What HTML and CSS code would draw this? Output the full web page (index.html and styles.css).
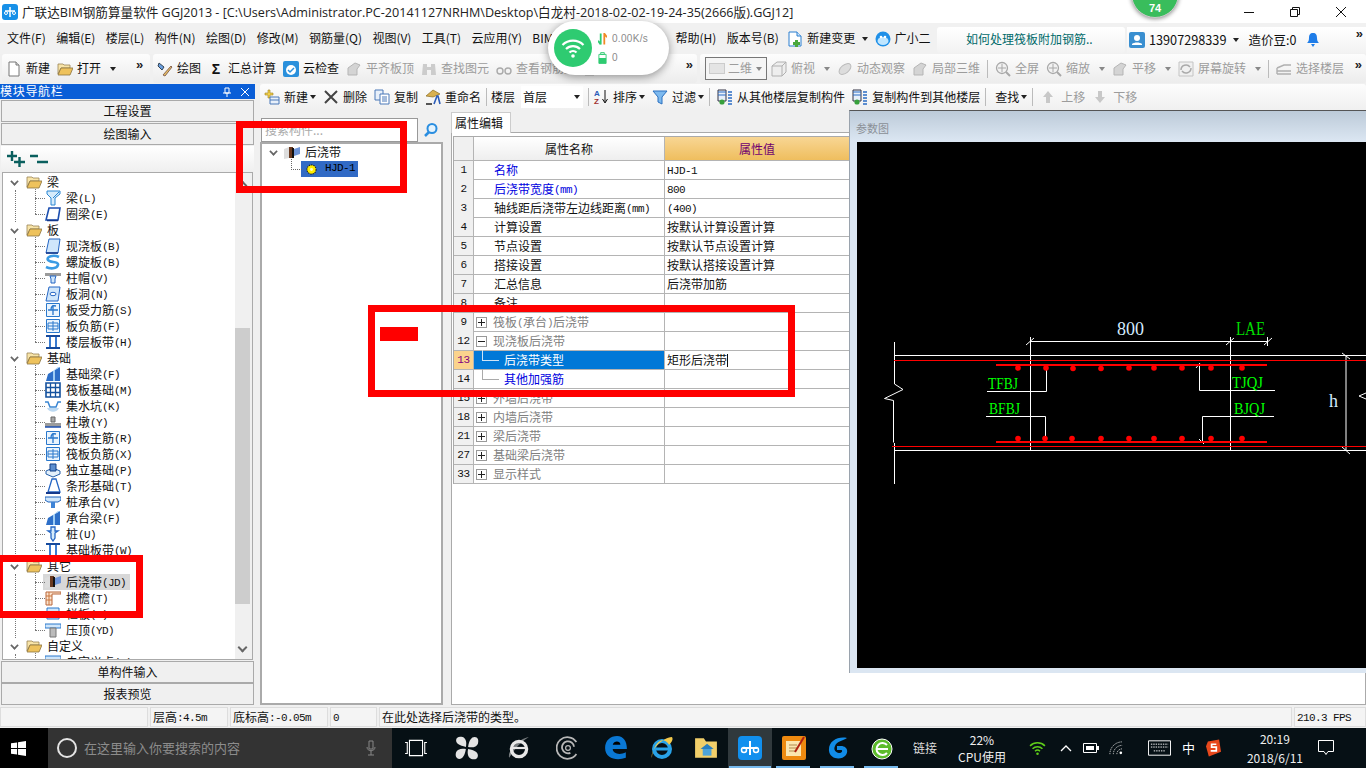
FILE: index.html
```html
<!DOCTYPE html>
<html lang="zh-CN">
<head>
<meta charset="utf-8">
<title>广联达BIM钢筋算量软件 GGJ2013</title>
<link rel="stylesheet" href="styles.css">
</head>
<body>
<svg class="defs" width="0" height="0">
  <symbol id="folder" viewBox="0 0 16 16"><path d="M1 3h5l1 1h6v3H4L1 13z" fill="#f8e4a8" stroke="#9a8454" stroke-width=".8"/><path d="M1 14l3-7h12l-3 7z" fill="#eec25c" stroke="#8c7440" stroke-width=".8"/></symbol>
  <symbol id="t-beam" viewBox="0 0 16 16"><path d="M2 1h13v3l-5 4v7H6V8L2 4z" fill="#d5ebfb" stroke="#2a86d2"/><path d="M8 8l6-6" stroke="#2a86d2"/></symbol>
  <symbol id="t-ring" viewBox="0 0 16 16"><path d="M4 2h11l-2 12H1z" fill="#fff" stroke="#1c4fb0" stroke-width="1.6"/><path d="M2 14.5h11" stroke="#14398c" stroke-width="1.5"/></symbol>
  <symbol id="t-slab" viewBox="0 0 16 16"><path d="M4 1h11l-2 14H1z" fill="#cfe6fb" stroke="#2566c4"/><path d="M1 15h12" stroke="#14398c" stroke-width="1.6"/></symbol>
  <symbol id="t-spiral" viewBox="0 0 16 16"><path d="M14 3C8 0 1 3 3 6s11 1 10 5-8 4-12 2" fill="none" stroke="#3a9be4" stroke-width="2.6"/></symbol>
  <symbol id="t-cap" viewBox="0 0 16 16"><path d="M0 3h16v3H0z" fill="#9b9b9b"/><path d="M5 6h6l-1 3v4H6V9z" fill="#cfe6fb" stroke="#2566c4"/></symbol>
  <symbol id="t-hole" viewBox="0 0 16 16"><path d="M4 1h11l-2 14H1z" fill="#cfe6fb" stroke="#2566c4"/><ellipse cx="8" cy="8" rx="3" ry="1.7" fill="#fff" stroke="#2566c4"/></symbol>
  <symbol id="t-force" viewBox="0 0 16 16"><path d="M1.500 1.500h13v13h-13z" fill="#eaf4fd" stroke="#2a78cc"/><path d="M8 3v10M3 8h10M11 4c-4-1-5 1-5 4" fill="none" stroke="#2a78cc" stroke-width="1.3"/></symbol>
  <symbol id="t-neg" viewBox="0 0 16 16"><path d="M1.500 1.500h13v13h-13z" fill="#eaf4fd" stroke="#2a78cc"/><path d="M8 3v10M3 8h10M3 5h10v6H3z" fill="none" stroke="#2a78cc"/></symbol>
  <symbol id="t-band" viewBox="0 0 16 16"><path d="M1 2h14M1 14h14" stroke="#164a9c" stroke-width="2"/><path d="M5 3v10M11 3v10" stroke="#3a7bd0" stroke-width="2"/></symbol>
  <symbol id="t-fbeam" viewBox="0 0 16 16"><path d="M1 15l2-7 5-3v10zM10 15V4l5-3v14z" fill="#2d6fc8"/><path d="M8 5l5-4 2 0-5 3v11H8z" fill="#9fcdf3"/></symbol>
  <symbol id="t-raft" viewBox="0 0 16 16"><path d="M1 1h14v14H1z" fill="#fff" stroke="#14529e" stroke-width="1.600"/><path d="M1 5.500h14M1 10.500h14M5.500 1v14M10.500 1v14" stroke="#14529e" stroke-width="1.300"/></symbol>
  <symbol id="t-pit" viewBox="0 0 16 16"><path d="M0 4h3l2 5h6l2-5h3" fill="none" stroke="#3a86d2" stroke-width="1.500"/><path d="M2 10c2 5 10 5 12 0z" fill="#bcd9f2"/></symbol>
  <symbol id="t-pier" viewBox="0 0 16 16"><path d="M6 3h4v5H6z" fill="#a8a8a8" stroke="#666"/><path d="M0 9h16v4H0z" fill="#9b9b9b"/><path d="M0 13h16" stroke="#1c4fb0" stroke-width="1.500"/></symbol>
  <symbol id="t-ind" viewBox="0 0 16 16"><path d="M1 9l7-3 7 3v3l-7 3-7-3z" fill="#e3f0fb" stroke="#245ea8"/><path d="M5 2h6v7H5z" fill="#5d8fcf" stroke="#133f86"/></symbol>
  <symbol id="t-strip" viewBox="0 0 16 16"><path d="M7 1h4l4 13H3z" fill="#fff" stroke="#2566c4" stroke-width="1.300"/><path d="M1 15h14" stroke="#14398c" stroke-width="2"/></symbol>
  <symbol id="t-pcap" viewBox="0 0 16 16"><path d="M0 3h16v3l-3 2H3L0 6z" fill="#cfe6fb" stroke="#1d63bd"/><path d="M6 8h4v6H6z" fill="#3e83d6"/></symbol>
  <symbol id="t-pile" viewBox="0 0 16 16"><path d="M6 1h4v4h3l-3 2v5l-2 3-2-3V7L3 5h3z" fill="#d5ebfb" stroke="#2566c4" stroke-width="1.300"/></symbol>
  <symbol id="t-post" viewBox="0 0 16 16"><path d="M0 2h16v4H0z" fill="#cfe6fb" stroke="#2a78cc"/><path d="M5 6h6v9H5z" fill="#bbb" stroke="#777"/></symbol>
  <symbol id="t-rail" viewBox="0 0 16 16"><path d="M2 2h12v11H2z" fill="#cfe6fb" stroke="#2a78cc"/></symbol>
  <symbol id="t-pour" viewBox="0 0 16 16"><path d="M0 4l5-2v11l-5 1z" fill="#ddd"/><path d="M5 2h4v11H5z" fill="#6a3a20"/><path d="M8 3h2v10H8z" fill="#111"/><path d="M10 4l6-2v7l-6 2z" fill="#6d94d8"/></symbol>
  <symbol id="t-eave" viewBox="0 0 16 16"><path d="M1 2h15v2H7v11H1z" fill="#fbe4cf" stroke="#b9663a"/><path d="M1 6h6M1 10h6M4 2v13" stroke="#c9743d"/></symbol>
  <symbol id="gear" viewBox="0 0 12 12"><circle cx="6" cy="6" r="5" fill="#ffee00" stroke="#222" stroke-width="1.200" stroke-dasharray="1.500 1"/><circle cx="6" cy="6" r="1.600" fill="#fffbd0"/></symbol>
  <symbol id="doc" viewBox="0 0 16 16"><path d="M3 1h7l3 3v11H3z" fill="#fff" stroke="#777"/><path d="M10 1v3h3" fill="#ddd" stroke="#777"/></symbol>
  <symbol id="gray" viewBox="0 0 16 16"><path d="M2 7l7-5 5 2-3 4v6H2z" fill="#d4d4d4" stroke="#b5b5b5"/></symbol>
  <symbol id="gray-box" viewBox="0 0 16 16"><path d="M1 5l5-4h9v10l-4 4H1z" fill="#eee" stroke="#b0b0b0"/><path d="M1 5h10v10M11 5l4-4" fill="none" stroke="#b0b0b0"/></symbol>
  <symbol id="gray-mag" viewBox="0 0 16 16"><circle cx="7" cy="7" r="5.500" fill="#f2f2f2" stroke="#a8a8a8" stroke-width="1.300"/><path d="M7 3v8M3 7h8" stroke="#a8a8a8"/><path d="M11 11l4 4" stroke="#a8a8a8" stroke-width="2"/></symbol>
  <symbol id="gray-rot" viewBox="0 0 16 16"><path d="M1 1h14v14H1z" fill="#f0f0f0" stroke="#c4c4c4"/><path d="M3 9a5 5 0 0 1 9-3M13 7a5 5 0 0 1-9 3" fill="none" stroke="#aaa" stroke-width="1.500"/></symbol>
  <symbol id="gray-lay" viewBox="0 0 16 16"><path d="M1 7l7-3h7M1 10h14M1 13h14M1 7v6" fill="none" stroke="#b0b0b0" stroke-width="1.400"/></symbol>
  <symbol id="copy-l" viewBox="0 0 16 16"><path d="M1 1h8v11H1z" fill="#e8f0fa" stroke="#334"/><path d="M1 3h8M1 6h8" stroke="#2b6cc4"/><circle cx="5" cy="13" r="2.600" fill="#37a03c"/><path d="M11 3h4M11 6h4M11 9h4M11 12h4M11 15h4" stroke="#2b6cc4" stroke-width="1.600"/></symbol>
  <symbol id="wifi" viewBox="0 0 24 20"><path d="M1.500 7a15 15 0 0 1 21 0M5 11a10 10 0 0 1 14 0M8.500 14.500a5 5 0 0 1 7 0" fill="none" stroke="currentColor" stroke-width="2.200"/><circle cx="12" cy="18" r="1.800" fill="currentColor"/></symbol>
</svg>

<div class="page">
  <header class="title">
    <svg class="appicon" viewBox="0 0 16 16"><rect width="16" height="16" rx="3" fill="#1790e8"/><path d="M8 3v10M3 7h10" stroke="#fff" stroke-width="1.500" fill="none"/><circle cx="4" cy="9" r="1.500" fill="none" stroke="#fff"/><circle cx="12" cy="9" r="1.500" fill="none" stroke="#fff"/></svg>
    <span class="title-text">广联达BIM钢筋算量软件 GGJ2013 - [C:\Users\Administrator.PC-20141127NRHM\Desktop\白龙村-2018-02-02-19-24-35(2666版).GGJ12]</span>
    <div class="winbtns">
      <svg viewBox="0 0 12 12"><path d="M1 6.500h10" stroke="#111"/></svg>
      <svg viewBox="0 0 12 12"><path d="M1.500 3.500h7v7h-7zM3.500 3.500v-2h7v7h-2" fill="none" stroke="#111"/></svg>
      <svg viewBox="0 0 12 12"><path d="M1 1l10 10M11 1L1 11" stroke="#111"/></svg>
    </div>
  </header>

  <nav class="menubar">
    <div class="menus">
      <span>文件(F)</span><span>编辑(E)</span><span>楼层(L)</span><span>构件(N)</span><span>绘图(D)</span><span>修改(M)</span><span>钢筋量(Q)</span><span>视图(V)</span><span>工具(T)</span><span>云应用(Y)</span><span>BIM应用(I)</span><span class="m-help">帮助(H)</span><span>版本号(B)</span>
      <span class="it m-change"><svg class="ic" viewBox="0 0 16 16"><path d="M2 1h8l4 4v10H2z" fill="#fff" stroke="#2b7fd0"/><path d="M10 1v4h4" fill="#cfe6fb" stroke="#2b7fd0"/><path d="M8 9h3v2h2v3h-2v2H8v-2H6v-3h2z" fill="#4aa83c"/></svg>新建变更<i class="car"></i></span>
      <span class="it m-xiao"><svg class="ic" viewBox="0 0 16 16"><circle cx="8" cy="8" r="7.500" fill="#1f90e8"/><ellipse cx="8" cy="10" rx="5.500" ry="4" fill="#bfe6ff"/><circle cx="6" cy="6" r="1.300" fill="#fff"/><circle cx="10" cy="6" r="1.300" fill="#fff"/></svg>广小二</span>
    </div>
    <div class="news">如何处理筏板附加钢筋..</div>
    <div class="user">
      <svg class="ic" viewBox="0 0 16 16"><rect width="16" height="16" rx="2" fill="#3a8fd0"/><circle cx="8" cy="6" r="3" fill="#fff"/><path d="M3 13h10v-1c-2-2-8-2-10 0z" fill="#fff"/></svg>
      <span class="phone">13907298339</span><i class="car"></i><span class="dou">造价豆:0</span>
      <svg class="bell" viewBox="0 0 12 14"><path d="M6 0c-3 0-4 2-4 5 0 3-1 4-2 5h12c-1-1-2-2-2-5 0-3-1-5-4-5z" fill="#1f7de8"/><path d="M4 11h4l-2 3z" fill="#1f7de8"/></svg>
      <span class="more">»</span>
    </div>
  </nav>

  <div class="toolbar1">
    <div class="seg seg-a">
      <span class="it"><svg class="ic"><use href="#doc"/></svg>新建</span>
      <span class="it"><svg class="ic"><use href="#folder"/></svg>打开<i class="car"></i></span>
      <span class="more">»</span>
    </div>
    <div class="seg seg-b">
      <span class="it"><svg class="ic" viewBox="0 0 16 16"><path d="M2 2l5 4-2 3-4-4z" fill="#6a9fe0" stroke="#345"/><path d="M6 14l8-9 1 1-7 9z" fill="#e8c060" stroke="#865"/></svg>绘图</span>
      <span class="it"><b class="sigma">Σ</b>汇总计算</span>
      <span class="it"><svg class="ic" viewBox="0 0 16 16"><rect width="16" height="16" rx="2" fill="#2a90dc"/><circle cx="8" cy="9" r="5" fill="#fff"/><path d="M5 9l2 2 4-4" fill="none" stroke="#2a90dc" stroke-width="1.500"/></svg>云检查</span>
      <span class="it off"><svg class="ic"><use href="#gray"/></svg>平齐板顶</span>
      <span class="it off"><svg class="ic" viewBox="0 0 16 16"><path d="M2 3h4v11H1zM10 3h4l1 11h-5zM6 6h4v3H6z" fill="#ccc"/></svg>查找图元</span>
      <span class="it off"><svg class="ic" viewBox="0 0 16 16"><circle cx="4" cy="10" r="3" fill="none" stroke="#aaa" stroke-width="1.400"/><circle cx="12" cy="10" r="3" fill="none" stroke="#aaa" stroke-width="1.400"/></svg>查看钢筋量</span>
      <span class="it off"><svg class="ic"><use href="#gray"/></svg>批量选择</span>
      <span class="more end">»</span>
    </div>
    <div class="seg seg-c">
      <span class="combo off"><i class="swatch"></i>二维<i class="car"></i></span>
      <span class="it off n"><svg class="ic"><use href="#gray-box"/></svg>俯视<i class="car"></i></span>
      <span class="it off"><svg class="ic" viewBox="0 0 16 16"><ellipse cx="8" cy="8" rx="7" ry="4" fill="#ddd" stroke="#bbb" transform="rotate(-40 8 8)"/></svg>动态观察</span>
      <span class="it off"><svg class="ic"><use href="#gray"/></svg>局部三维</span>
      <i class="sep"></i>
      <span class="it off n"><svg class="ic"><use href="#gray-mag"/></svg>全屏</span>
      <span class="it off"><svg class="ic"><use href="#gray-mag"/></svg>缩放<i class="car"></i></span>
      <span class="it off"><svg class="ic"><use href="#gray"/></svg>平移<i class="car"></i></span>
      <span class="it off"><svg class="ic"><use href="#gray-rot"/></svg>屏幕旋转<i class="car"></i></span>
      <i class="sep"></i>
      <span class="it off"><svg class="ic"><use href="#gray-lay"/></svg>选择楼层</span>
      <span class="more end">»</span>
    </div>
  </div>

  <main class="main">
    <aside class="nav">
      <div class="nav-head"><span>模块导航栏</span>
        <svg viewBox="0 0 10 10"><path d="M3 1h4v5H3zM1 6h8M5 6v4" fill="none" stroke="#fff"/></svg>
        <svg viewBox="0 0 10 10"><path d="M1 1l8 8M9 1L1 9" stroke="#fff"/></svg>
      </div>
      <div class="nav-btn">工程设置</div>
      <div class="nav-btn">绘图输入</div>
      <div class="nav-tools">
        <svg viewBox="0 0 18 16"><path d="M0 5h10M5 0v10M7 11h11M12.500 6v10" stroke="#0a5f5e" stroke-width="2.400"/></svg>
        <svg viewBox="0 0 18 16"><path d="M0 5h8M7 11h11" stroke="#0a5f5e" stroke-width="2.400"/></svg>
      </div>
      <div class="nav-tree">
        <div class="tree">
          <div class="grp">
            <div class="gh"><i class="chev"></i><svg class="ti"><use href="#folder"/></svg>梁</div>
            <div class="node"><svg class="ti"><use href="#t-beam"/></svg>梁<b class="m">(L)</b></div>
            <div class="node"><svg class="ti"><use href="#t-ring"/></svg>圈梁<b class="m">(E)</b></div>
          </div>
          <div class="grp">
            <div class="gh"><i class="chev"></i><svg class="ti"><use href="#folder"/></svg>板</div>
            <div class="node"><svg class="ti"><use href="#t-slab"/></svg>现浇板<b class="m">(B)</b></div>
            <div class="node"><svg class="ti"><use href="#t-spiral"/></svg>螺旋板<b class="m">(B)</b></div>
            <div class="node"><svg class="ti"><use href="#t-cap"/></svg>柱帽<b class="m">(V)</b></div>
            <div class="node"><svg class="ti"><use href="#t-hole"/></svg>板洞<b class="m">(N)</b></div>
            <div class="node"><svg class="ti"><use href="#t-force"/></svg>板受力筋<b class="m">(S)</b></div>
            <div class="node"><svg class="ti"><use href="#t-neg"/></svg>板负筋<b class="m">(F)</b></div>
            <div class="node"><svg class="ti"><use href="#t-band"/></svg>楼层板带<b class="m">(H)</b></div>
          </div>
          <div class="grp">
            <div class="gh"><i class="chev"></i><svg class="ti"><use href="#folder"/></svg>基础</div>
            <div class="node"><svg class="ti"><use href="#t-fbeam"/></svg>基础梁<b class="m">(F)</b></div>
            <div class="node"><svg class="ti"><use href="#t-raft"/></svg>筏板基础<b class="m">(M)</b></div>
            <div class="node"><svg class="ti"><use href="#t-pit"/></svg>集水坑<b class="m">(K)</b></div>
            <div class="node"><svg class="ti"><use href="#t-pier"/></svg>柱墩<b class="m">(Y)</b></div>
            <div class="node"><svg class="ti"><use href="#t-force"/></svg>筏板主筋<b class="m">(R)</b></div>
            <div class="node"><svg class="ti"><use href="#t-neg"/></svg>筏板负筋<b class="m">(X)</b></div>
            <div class="node"><svg class="ti"><use href="#t-ind"/></svg>独立基础<b class="m">(P)</b></div>
            <div class="node"><svg class="ti"><use href="#t-strip"/></svg>条形基础<b class="m">(T)</b></div>
            <div class="node"><svg class="ti"><use href="#t-pcap"/></svg>桩承台<b class="m">(V)</b></div>
            <div class="node"><svg class="ti"><use href="#t-fbeam"/></svg>承台梁<b class="m">(F)</b></div>
            <div class="node"><svg class="ti"><use href="#t-pile"/></svg>桩<b class="m">(U)</b></div>
            <div class="node"><svg class="ti"><use href="#t-band"/></svg>基础板带<b class="m">(W)</b></div>
          </div>
          <div class="grp">
            <div class="gh"><i class="chev"></i><svg class="ti"><use href="#folder"/></svg>其它</div>
            <div class="node sel"><svg class="ti"><use href="#t-pour"/></svg><span>后浇带<b class="m">(JD)</b></span></div>
            <div class="node"><svg class="ti"><use href="#t-eave"/></svg>挑檐<b class="m">(T)</b></div>
            <div class="node"><svg class="ti"><use href="#t-rail"/></svg>栏板<b class="m">(K)</b></div>
            <div class="node"><svg class="ti"><use href="#t-post"/></svg>压顶<b class="m">(YD)</b></div>
          </div>
          <div class="grp">
            <div class="gh"><i class="chev"></i><svg class="ti"><use href="#folder"/></svg>自定义</div>
            <div class="node"><svg class="ti"><use href="#t-post"/></svg>自定义点<b class="m">(X)</b></div>
          </div>
        </div>
        <div class="vscroll"><i class="sb-up"></i><i class="thumb"></i><i class="sb-down"></i></div>
      </div>
      <div class="nav-btn b2">单构件输入</div>
      <div class="nav-btn b2">报表预览</div>
    </aside>

    <section class="work">
      <div class="toolbar2">
        <span class="it"><svg class="ic" viewBox="0 0 16 16"><path d="M1 4h3V1h2v3h3v2H6v3H4V6H1z" fill="#f2d04a" stroke="#a08020" stroke-width=".6"/><path d="M6 8h9v7H6z" fill="#e8f0fa" stroke="#4a78b8"/><path d="M6 11h9" stroke="#4a78b8"/></svg>新建<i class="car"></i></span>
        <span class="it"><svg class="ic" viewBox="0 0 16 16"><path d="M2 2l12 12M14 2L2 14" stroke="#444" stroke-width="2"/></svg>删除</span>
        <span class="it"><svg class="ic" viewBox="0 0 16 16"><path d="M1 1h8v10H1z" fill="#e8f0fa" stroke="#4a78b8"/><path d="M6 5h9v10H6z" fill="#fff" stroke="#4a78b8"/><path d="M8 8h5M8 10h5M8 12h5" stroke="#4a78b8"/></svg>复制</span>
        <span class="it"><svg class="ic" viewBox="0 0 16 16"><path d="M1 7l7-6 7 4-7 3z" fill="#d8b050" stroke="#8a6a20" stroke-width=".7"/><path d="M9 15l3-8h1l2 8" fill="none" stroke="#2b5cb8" stroke-width="1.600"/><path d="M1 15h6" stroke="#555" stroke-width="2"/></svg>重命名</span>
        <i class="sep s2"></i>
        <span class="floor">楼层</span>
        <span class="floor-combo">首层<i class="car"></i></span>
        <i class="sep s2"></i>
        <span class="it"><svg class="ic" viewBox="0 0 16 16"><text x="1" y="7" class="az a">A</text><text x="1" y="15" class="az z">Z</text><path d="M12 1v12M9.500 10l2.500 4 2.500-4" fill="none" stroke="#111"/></svg>排序<i class="car"></i></span>
        <span class="it"><svg class="ic" viewBox="0 0 16 16"><path d="M1 2h14l-5 6v7l-4-2V8z" fill="#7db9ee" stroke="#2a70c0"/></svg>过滤<i class="car"></i></span>
        <i class="sep s2"></i>
        <span class="it copy-first"><svg class="ic"><use href="#copy-l"/></svg>从其他楼层复制构件</span>
        <span class="it"><svg class="ic"><use href="#copy-l"/></svg>复制构件到其他楼层</span>
        <i class="sep s2"></i>
        <span class="it find"><span>查找</span><i class="car"></i></span>
        <i class="sep s2"></i>
        <span class="it off up"><svg class="arrow" viewBox="0 0 10 12"><path d="M5 0l5 6H7v6H3V6H0z" fill="#c8c8c8"/></svg>上移</span>
        <span class="it off"><svg class="arrow" viewBox="0 0 10 12"><path d="M3 0h4v6h3l-5 6-5-6h3z" fill="#c8c8c8"/></svg>下移</span>
      </div>
      <div class="panes">
        <div class="list-pane">
          <div class="search"><div class="search-box">搜索构件...</div>
            <svg viewBox="0 0 16 16"><circle cx="9" cy="6.500" r="4.500" fill="#e4f3fd" stroke="#2a8ee0" stroke-width="2"/><path d="M6 10l-4 4" stroke="#2a8ee0" stroke-width="2.500"/></svg>
          </div>
          <div class="list-tree">
            <div class="lt-head"><i class="chev"></i><svg class="ti"><use href="#t-pour"/></svg>后浇带</div>
            <div class="lt-item"><span class="lt-sel"><svg viewBox="0 0 12 12"><use href="#gear"/></svg><b class="m">HJD-1</b></span></div>
          </div>
        </div>
        <div class="prop-pane">
          <div class="tabs"><span class="tab">属性编辑</span></div>
          <div class="prop-body">
            <div class="grid">
              <div class="row head"><span class="num"></span><span class="nm">属性名称</span><span class="val">属性值</span></div>
              <div class="row"><span class="num">1</span><span class="nm blue">名称</span><span class="val"><b class="m">HJD-1</b></span></div>
              <div class="row"><span class="num">2</span><span class="nm blue">后浇带宽度<b class="m">(mm)</b></span><span class="val"><b class="m">800</b></span></div>
              <div class="row"><span class="num">3</span><span class="nm">轴线距后浇带左边线距离<b class="m">(mm)</b></span><span class="val"><b class="m">(400)</b></span></div>
              <div class="row"><span class="num">4</span><span class="nm">计算设置</span><span class="val">按默认计算设置计算</span></div>
              <div class="row"><span class="num">5</span><span class="nm">节点设置</span><span class="val">按默认节点设置计算</span></div>
              <div class="row"><span class="num">6</span><span class="nm">搭接设置</span><span class="val">按默认搭接设置计算</span></div>
              <div class="row"><span class="num">7</span><span class="nm">汇总信息</span><span class="val">后浇带加筋</span></div>
              <div class="row"><span class="num">8</span><span class="nm">备注</span><span class="val"></span></div>
              <div class="row"><span class="num">9</span><span class="nm gp"><i class="pm plus"></i>筏板<b class="m">(</b>承台<b class="m">)</b>后浇带</span><span class="val"></span></div>
              <div class="row"><span class="num">12</span><span class="nm gp"><i class="pm"></i>现浇板后浇带</span><span class="val"></span></div>
              <div class="row"><span class="num act">13</span><span class="nm ch selc">后浇带类型</span><span class="val">矩形后浇带<i class="caret"></i></span></div>
              <div class="row"><span class="num">14</span><span class="nm ch blue">其他加强筋</span><span class="val"></span></div>
              <div class="row"><span class="num">15</span><span class="nm gp"><i class="pm plus"></i>外墙后浇带</span><span class="val"></span></div>
              <div class="row"><span class="num">18</span><span class="nm gp"><i class="pm plus"></i>内墙后浇带</span><span class="val"></span></div>
              <div class="row"><span class="num">21</span><span class="nm gp"><i class="pm plus"></i>梁后浇带</span><span class="val"></span></div>
              <div class="row"><span class="num">27</span><span class="nm gp"><i class="pm plus"></i>基础梁后浇带</span><span class="val"></span></div>
              <div class="row"><span class="num">33</span><span class="nm gp"><i class="pm plus"></i>显示样式</span><span class="val"></span></div>
            </div>
          </div>
        </div>
      </div>
    </section>

    <div class="param">
      <div class="param-title">参数图</div>
      <svg class="canvas" viewBox="857 141 509 526">
        <g class="w">
          <path d="M1030 340.500H1268M895 354.500H1366M895 449.500H1366M1030.500 336v113.500M1230.500 336v113.500M1267.500 336v9M1346 354v96"/>
          <path d="M894.500 341V383L903 388.500L884.500 397.500L893.500 399.500V441.500M894.500 442V483"/>
          <path d="M987 390.500H1046.500V368M986 415.500H1045.500V435M1275 389.500H1199.500V363M1274 415.500H1202.500V441.500"/>
          <path d="M1026 344l8-7M1226 344l8-7M1264 344l8-7M1342 352l8 6M1342 446l8 7M1196 367l4-5M1199 438l5 5M1366 392l-7 3 7 3"/>
        </g>
        <path class="r1" d="M894 359.500H1366M892 445.500H1366"/>
        <path class="r2" d="M996 364H1267M996 441H1267"/>
        <g class="dots">
          <circle cx="1018" cy="367" r="2.800"/><circle cx="1046" cy="367" r="2.800"/><circle cx="1073" cy="367.500" r="2.800"/><circle cx="1101" cy="367.500" r="2.800"/><circle cx="1129" cy="367" r="2.800"/><circle cx="1154" cy="367" r="2.800"/><circle cx="1182" cy="367" r="2.800"/><circle cx="1211" cy="367" r="2.800"/><circle cx="1242" cy="367" r="2.800"/>
          <circle cx="1018" cy="437.500" r="2.800"/><circle cx="1045" cy="437.500" r="2.800"/><circle cx="1072" cy="437.500" r="2.800"/><circle cx="1101" cy="437.500" r="2.800"/><circle cx="1129" cy="437.500" r="2.800"/><circle cx="1154" cy="437.500" r="2.800"/><circle cx="1182" cy="437.500" r="2.800"/><circle cx="1211" cy="437.500" r="2.800"/><circle cx="1242" cy="437.500" r="2.800"/>
        </g>
        <text class="t-big t-w" x="1117" y="334">800</text>
        <text class="t-big t-g" x="1236" y="334" textLength="29" lengthAdjust="spacingAndGlyphs">LAE</text>
        <text class="t-big t-w" x="1329" y="406">h</text>
        <text class="t-lab" x="988" y="388" textLength="30" lengthAdjust="spacingAndGlyphs">TFBJ</text>
        <text class="t-lab" x="989" y="413" textLength="31" lengthAdjust="spacingAndGlyphs">BFBJ</text>
        <text class="t-lab" x="1232" y="387" textLength="31" lengthAdjust="spacingAndGlyphs">TJQJ</text>
        <text class="t-lab" x="1234" y="413" textLength="31" lengthAdjust="spacingAndGlyphs">BJQJ</text>
      </svg>
    </div>
  </main>

  <footer class="status">
    <span class="st st0"></span>
    <span class="st st1">层高<b class="m">:4.5m</b></span>
    <span class="st st2">底标高<b class="m">:-0.05m</b></span>
    <span class="st st3"><b class="m">0</b></span>
    <span class="st st4">在此处选择后浇带的类型。</span>
    <span class="st st5"><b class="m">210.3 FPS</b></span>
  </footer>

  <div class="taskbar">
    <div class="start"><svg viewBox="0 0 16 16"><path d="M0 2.500l6.500-1v6H0zM7.500 1.300L16 0v7.500H7.500zM0 8.500h6.500v6l-6.500-1zM7.500 8.500H16V16l-8.500-1.300z" fill="#fff"/></svg></div>
    <div class="tsearch">
      <i class="cortana"></i><span>在这里输入你要搜索的内容</span>
      <svg viewBox="0 0 10 16"><path d="M3 1h4v8H3z" fill="none" stroke="#888"/><path d="M1 7c0 5 8 5 8 0M5 11v4M2 15h6" fill="none" stroke="#888"/></svg>
    </div>
    <div class="tslot t48"><svg viewBox="0 0 22 16"><path d="M5 1h12v14H5zM1 3h2v10H1M21 3h-2v10h2" fill="none" stroke="#fff"/></svg></div>
    <div class="tslot t54"><svg viewBox="0 0 22 22"><path d="M10 10C4 9 1 7 1 4s3-4 6-3 4 5 3 9zM12 10c1-6 3-9 6-9s4 3 3 6-5 4-9 3zM12 12c6 1 9 3 9 6s-3 4-6 3-4-5-3-9zM10 12c-1 6-3 9-6 9s-4-3-3-6 5-4 9-3z" fill="#e4e4e4"/></svg></div>
    <div class="tslot t50"><svg viewBox="0 0 22 22"><circle cx="11" cy="12" r="7" fill="none" stroke="#e8e8e8" stroke-width="3"/><path d="M5 11h13" stroke="#e8e8e8" stroke-width="2"/><path d="M2 20C0 15 9 3 20 1c-4 3-10 6-18 19z" fill="#e8e8e8" opacity=".5"/></svg></div>
    <div class="tslot t48"><svg viewBox="0 0 20 20"><path d="M17 5A9 9 0 1 0 17 15M15 9A5 5 0 1 0 12 14" fill="none" stroke="#b8b8b8" stroke-width="1.500"/><circle cx="10" cy="10" r="2" fill="none" stroke="#b8b8b8"/></svg></div>
    <div class="tslot t48"><svg viewBox="0 0 22 22"><path d="M1 11C1 4 6 0 12 0c6 0 9 5 9 12H8c0 4 6 6 12 3v5c-8 3-19 1-19-9z" fill="#0a78d4"/><path d="M8 8h7c0-4-6-4-7 0z" fill="#000"/></svg></div>
    <div class="tslot t44"><svg viewBox="0 0 24 24"><circle cx="12" cy="13" r="8" fill="none" stroke="#29a3e8" stroke-width="4"/><path d="M5 13h15" stroke="#29a3e8" stroke-width="3"/><path d="M2 22C0 14 12 2 22 1c2 3-2 7-3 8-1-3-6-6-9-4-5 3-8 11-8 17z" fill="#f2c94c"/></svg></div>
    <div class="tslot t44"><svg viewBox="0 0 22 20"><path d="M1 1h8l2 3h10v15H1z" fill="#f2cf6a"/><path d="M8 9h8v8H8z" fill="#4da3d8"/><path d="M6 11h12l-6-5z" fill="#2a7fc0"/></svg></div>
    <div class="tslot t44 active"><svg viewBox="0 0 24 24"><rect width="24" height="24" rx="4" fill="#1190ee"/><path d="M12 5v14M5 12h14" stroke="#fff" stroke-width="2"/><circle cx="6" cy="14" r="2.500" fill="none" stroke="#fff" stroke-width="1.500"/><circle cx="18" cy="14" r="2.500" fill="none" stroke="#fff" stroke-width="1.500"/></svg></div>
    <div class="tslot t44 run"><svg viewBox="0 0 24 24"><rect width="24" height="24" rx="2" fill="#ee8a10"/><path d="M4 5h15v15H4z" fill="#fbe6b0"/><path d="M7 9h8M7 12h8M7 15h6" stroke="#b08a50"/><path d="M13 16L22 1" stroke="#b02010" stroke-width="2"/></svg></div>
    <div class="tslot t44 run"><svg viewBox="0 0 24 24"><path d="M21 2C12 0 2 5 3 15c1 8 12 10 17 4 3-5 0-9-5-9h-4v4h4c2 0 1 3-1 3-4 0-7-3-5-7 2-5 8-5 12-8z" fill="#118ce8"/></svg></div>
    <div class="tslot t44 run"><svg viewBox="0 0 24 24"><circle cx="12" cy="13" r="10" fill="#5cbb2a" stroke="#fff"/><path d="M6 13h12M17 9a6 6 0 1 0 0 8" fill="none" stroke="#fff" stroke-width="2"/></svg></div>
    <span class="tray-link">链接</span>
    <div class="cpu"><span>22%</span><span>CPU使用</span></div>
    <svg class="tr-wifi"><use href="#wifi"/></svg>
    <svg class="tr-up" viewBox="0 0 12 8"><path d="M1 7l5-5 5 5" fill="none" stroke="#fff" stroke-width="1.300"/></svg>
    <svg class="tr-bat" viewBox="0 0 16 10"><path d="M.500.500h13v9h-13z" fill="none" stroke="#fff"/><path d="M3 3h8v4H3z" fill="#fff"/><path d="M14 3h2v4h-2z" fill="#fff"/></svg>
    <svg class="tr-sig" viewBox="0 0 16 16"><path d="M1 15A14 14 0 0 1 15 1M5 15A10 10 0 0 1 15 5M9 15a6 6 0 0 1 6-6" fill="none" stroke="#ddd" stroke-dasharray="1.500 1"/><circle cx="13.500" cy="13.500" r="1.500" fill="#fff"/></svg>
    <svg class="tr-kb" viewBox="0 0 24 16"><path d="M.500.500h23v15H.500z" fill="none" stroke="#fff"/><path d="M3 4h18M3 7h18M6 11h12" stroke="#fff" stroke-dasharray="1.500 1"/></svg>
    <span class="tr-zh">中</span>
    <svg class="tr-s" viewBox="0 0 16 18"><path d="M2 2l12-2 2 13-13 5-3-11z" fill="#e8481c"/><path d="M11 5H6v3h5v4H5" fill="none" stroke="#fff" stroke-width="1.800"/></svg>
    <div class="clock"><span>20:19</span><span>2018/6/11</span></div>
    <svg class="tr-note" viewBox="0 0 16 16"><path d="M.500.500h15v11H10l-2 3-2-3H.500z" fill="none" stroke="#fff"/></svg>
  </div>

  <div class="pill">
    <div class="pill-dot"><svg><use href="#wifi"/></svg></div>
    <div class="pill-info">
      <div class="pill-line"><svg viewBox="0 0 10 12"><path d="M3 0v12M0 8l3 4" stroke="#2ecb71" stroke-width="2" fill="none"/><path d="M7 12V0l3 4" stroke="#f08a24" stroke-width="2" fill="none"/></svg>0.00K/s</div>
      <div class="pill-line"><svg viewBox="0 0 10 12"><path d="M3 0h4v2H3zM1 2h8v10H1z" fill="#fff" stroke="#2ecb71"/><path d="M1 6h8v6H1z" fill="#2ecb71"/></svg>0</div>
    </div>
  </div>
  <div class="score">74</div>
  <i class="mark m1"></i>
  <i class="mark m2"></i>
  <i class="mark m3"></i>
  <i class="mark-bar"></i>
</div>
</body>
</html>
```

FILE: styles.css
```css
* { box-sizing: border-box; }
html, body { margin: 0; padding: 0; }
body { width: 1366px; height: 768px; overflow: hidden; font: 12px/1.2 "Noto Sans CJK SC", sans-serif; color: #111; background: #f0f0f0; }
i, b { font-style: normal; font-weight: normal; }
.defs { position: absolute; }
.page { position: relative; width: 1366px; height: 768px; display: flex; flex-direction: column; overflow: hidden; }

.m { font-family: "Liberation Mono", monospace; font-size: 11px; letter-spacing: -.6px; vertical-align: 1px; }

.title { height: 23px; background: #fff; display: flex; align-items: center; padding-left: 2px; }
.appicon { width: 16px; height: 16px; flex: none; }
.title-text { margin-left: 4px; font: 12.600px "Open Sans", "Noto Sans CJK SC", sans-serif; white-space: nowrap; color: #222; }
.winbtns { margin-left: auto; display: flex; gap: 34px; padding-right: 19px; }
.winbtns svg { width: 12px; height: 12px; }

.menubar { height: 31px; background: #f1f1f1; display: flex; align-items: center; }
.menus { display: flex; align-items: center; gap: 10.400px; padding-left: 7px; width: 937px; white-space: nowrap; }
.m-help { margin-left: 76px; }
.menus .car { margin-left: 3px; }
.m-change { margin-left: -2px; }
.m-xiao { margin-left: -4px; }
.news { width: 188px; height: 26px; margin-top: 2px; background: linear-gradient(#fff, #f2f2f2); border-radius: 3px; color: #006a6a; font-size: 12px; padding: 5px 0 0 29px; white-space: nowrap; }
.user { flex: 1; height: 26px; margin: 2px 0 0 2px; background: linear-gradient(#fff, #f2f2f2); display: flex; align-items: center; padding-left: 2px; position: relative; }
.phone { margin-left: 4px; font-size: 12.700px; }
.dou { margin-left: 9px; font-size: 12.500px; }
.user .car { margin-left: 7px; }
.bell { width: 12px; height: 14px; margin-left: 11px; }
.user .more { position: absolute; right: 3px; top: 0; }

.it { display: inline-flex; align-items: center; gap: 4px; white-space: nowrap; }
.ic { width: 16px; height: 16px; flex: none; }
.off { color: #9c9c9c; }
.car { display: inline-block; width: 0; height: 0; border: 3px solid transparent; border-top: 4px solid #222; border-bottom: 0; margin-left: 0; }
.toolbar1 .car { margin-left: 5px; }
.toolbar2 .it .car { margin-left: -2px; }
.off .car { border-top-color: #888; }
.more { font: bold 13px/1 "Liberation Sans", sans-serif; color: #222; }
.sep { width: 1px; height: 18px; background: #bbb; flex: none; }

.toolbar1 { height: 30px; display: flex; padding: 0 0 1px 2px; gap: 3px; }
.seg { background: linear-gradient(#fdfdfd, #ececec); border-radius: 3px; display: flex; align-items: center; white-space: nowrap; position: relative; }
.seg-a { width: 148px; padding-left: 4px; gap: 7px; }
.seg-a .more { position: absolute; left: 134px; top: 4px; }
.seg-b { width: 544px; padding-left: 4px; gap: 7px; overflow: hidden; }
.seg-c { flex: 1; padding-left: 5px; gap: 7px; }
.seg .end { position: absolute; top: 4px; right: 4px; }
.sigma { width: 16px; text-align: center; font: bold 14px "Liberation Sans", sans-serif; }
.combo { width: 62px; height: 23px; border: 1px solid #777; display: flex; align-items: center; padding-left: 3px; gap: 3px; margin-right: -3px; background: #f5f5f5; }
.swatch { width: 16px; height: 11px; background: #e4e4e4; border: 1px solid #ccc; }
.toolbar1 .combo .car { margin-left: 1px; }

.main { height: 622px; display: flex; position: relative; }
.nav { width: 255px; display: flex; flex-direction: column; flex: none; }
.nav-head { height: 15px; background: #0a5ed7; color: #fff; display: flex; align-items: center; font-size: 12px; letter-spacing: .7px; padding-right: 5px; margin-bottom: 1px; }
.nav-head span { flex: 1; }
.nav-head svg { width: 10px; height: 10px; margin-left: 8px; }
.nav-btn { height: 22px; margin: 0 1px 1px; background: #f0f0f0; border: 1px solid #aaa; text-align: center; font-size: 12px; line-height: 20px; flex: none; }
.nav-tools { height: 26px; margin: 0 1px; display: flex; align-items: center; gap: 5px; padding-left: 6px; background: linear-gradient(#fff, #efefef); }
.nav-tools svg { width: 18px; height: 16px; }
.nav-tree { height: 488px; display: flex; margin: 0 2px 1px; border: 1px solid #aaa; background: #fff; overflow: hidden; flex: none; }
.tree { flex: 1; padding-top: 1px; overflow: hidden; }
.grp { position: relative; }
.grp::before { content: ""; position: absolute; left: 12px; top: 16px; bottom: 0; border-left: 1px dotted #777; }
.gh { height: 16px; display: flex; align-items: center; white-space: nowrap; position: relative; padding-left: 23px; }
.gh .ti { margin-right: 5px; }
.chev { position: absolute; left: 8px; top: 4px; width: 7px; height: 7px; border-right: 2px solid #666; border-bottom: 2px solid #666; transform: rotate(45deg) scale(.85); }
.ti { width: 16px; height: 16px; flex: none; }
.node { height: 16px; line-height: 16px; white-space: nowrap; position: relative; padding-left: 42px; }
.node .ti { display: inline-block; vertical-align: top; margin-right: 5px; }
.node::before { content: ""; position: absolute; left: 32px; top: 8px; width: 10px; border-top: 1px dotted #777; }
.node::after { content: ""; position: absolute; left: 32px; top: -1px; height: 17px; border-left: 1px dotted #777; }
.node:last-child::after { height: 9px; }
.sel { padding-left: 40px; }
.node.sel .ti { background: #d8d8d8; margin-right: 0; width: 23px; padding: 0 5px 0 2px; }
.sel span { display: inline-block; height: 16px; vertical-align: top; background: #d8d8d8; padding-right: 4px; }
.vscroll { width: 17px; flex: none; background: #f0f0f0; position: relative; }
.thumb { position: absolute; left: 0; top: 155px; width: 15px; height: 276px; background: #cdcdcd; }
.sb-up, .sb-down { position: absolute; left: 4px; width: 7px; height: 7px; border-right: 2px solid #666; border-bottom: 2px solid #666; }
.sb-up { top: 9px; transform: rotate(225deg); }
.sb-down { bottom: 8px; transform: rotate(45deg); }
.b2 { margin-bottom: 0; height: 22px; }

.work { flex: 1; display: flex; flex-direction: column; padding-left: 5px; min-width: 0; }
.toolbar2 { height: 26px; display: flex; align-items: center; gap: 7px; padding-left: 4px; background: linear-gradient(#fdfdfd, #f0f0f0); border-radius: 3px; white-space: nowrap; flex: none; }
.az { font: bold 8px "Liberation Sans", sans-serif; }
.a { fill: #2b5cb8; } .z { fill: #a03030; }
.floor-combo { width: 62px; height: 22px; background: #fff; display: flex; align-items: center; justify-content: space-between; padding: 0 3px 0 2px; margin-left: -1px; }
.arrow { width: 10px; height: 12px; margin: 0 4px 0 3px; }
.s2 { margin: 0 -2.500px; }
.copy-first { margin-left: 3px; }
.find { margin-left: 5px; }
.up { margin-left: 3px; }

.panes { flex: 1; display: flex; gap: 8px; min-height: 0; }
.list-pane { width: 183px; display: flex; flex-direction: column; padding-top: 7px; flex: none; }
.search { height: 25px; display: flex; align-items: center; gap: 5px; flex: none; padding-left: 1px; }
.search-box { width: 157px; height: 24px; background: #fff; border: 1px solid #999; color: #aaa; padding: 4px 3px; }
.search svg { width: 16px; height: 16px; }
.list-tree { flex: 1; background: #fff; border: 2px solid #aaa; margin-bottom: 1px; }
.lt-head { height: 17px; display: flex; align-items: center; gap: 5px; position: relative; padding-left: 22px; }
.lt-head .chev { left: 8px; top: 4px; }
.lt-item { height: 16px; padding-left: 39px; position: relative; }
.lt-item::before { content: ""; position: absolute; left: 29px; top: -2px; height: 10px; width: 10px; border-left: 1px dotted #666; border-bottom: 1px dotted #666; }
.lt-sel { display: inline-flex; align-items: center; gap: 8px; width: 57px; height: 16px; background: #316ac5; padding-left: 5px; color: #000; }
.lt-sel svg { width: 11px; height: 11px; }

.prop-pane { flex: 1; display: flex; flex-direction: column; padding-top: 2px; min-width: 0; }
.tabs { height: 20px; flex: none; }
.tab { display: inline-block; width: 60px; height: 21px; background: #fff; border: 1px solid #ccc; border-bottom: 0; padding-left: 3px; line-height: 19px; position: relative; z-index: 1; }
.prop-body { flex: 1; background: #fff; border: 1px solid #aaa; padding: 3px 0 0 1px; margin-bottom: 1px; overflow: hidden; }
.grid { border-top: 1px solid #aaa; border-left: 1px solid #aaa; }
.row { display: grid; grid-template-columns: 20px 191px 1fr; height: 19px; border-bottom: 1px solid #b4b4b4; align-items: stretch; white-space: nowrap; }
.row > span { line-height: 18px; overflow: visible; }
.num { background: #f0f0f0; border-right: 1px solid #b4b4b4; text-align: center; font-family: "Liberation Mono", monospace; font-size: 11px; letter-spacing: -.4px; }
.nm { border-right: 1px solid #b4b4b4; padding-left: 20px; position: relative; }
.val { padding-left: 2px; }
.head { height: 24px; }
.head > span { line-height: 23px; text-align: center; }
.head .nm { background: linear-gradient(#fff, #eee); padding-left: 0; }
.head .val { background: linear-gradient(#f8d694, #efbe5e); color: #700070; width: 184px; padding-left: 0; }
.blue { color: #0000e0; }
.gp { color: #808080; padding-left: 2px; }
.pm { display: inline-block; vertical-align: -1px; width: 11px; height: 11px; margin-right: 6px; border: 1px solid #999; background: #fff; position: relative; }
.pm::before { content: ""; position: absolute; left: 1px; right: 1px; top: 4px; height: 1px; background: #222; }
.plus::after { content: ""; position: absolute; top: 1px; bottom: 1px; left: 4px; width: 1px; background: #222; }
.ch { padding-left: 30px; }
.ch::before { content: ""; position: absolute; left: 8px; top: -1px; width: 16px; height: 10px; border-left: 1px solid #aaa; border-bottom: 1px solid #aaa; }
.selc { background: #0078d7; color: #fff; }
.selc.ch::before { border-color: #cfe4f7; }
.act { background: #fbd38d; color: #800080; }
.caret { display: inline-block; width: 1px; height: 13px; background: #111; vertical-align: -2px; }

.param { position: absolute; left: 849px; top: 26px; width: 517px; height: 563px; background: linear-gradient(#bccad8, #dbe6f2 30px, #dbe6f2); border-top: 1px solid #555; border-left: 1px solid #9aa3ad; padding: 31px 0 6px 7px; }
.param-title { position: absolute; left: 6px; top: 11px; color: #8a8f96; font-size: 11px; }
.canvas { display: block; width: 509px; height: 526px; background: #000; }
.w path { fill: none; stroke: #fff; stroke-width: 1; }
.r1 { fill: none; stroke: #ff0000; stroke-width: 1; }
.r2 { fill: none; stroke: #ff0000; stroke-width: 2; }
.dots circle { fill: #ff0000; }
.t-big { font: 18px "Liberation Serif", serif; }
.t-w { fill: #d4ecff; }
.t-g { fill: #00dd00; }
.t-lab { font: 17px "Liberation Serif", serif; fill: #00ff00; }

.status { height: 22px; display: flex; gap: 2px; padding: 1px 0; background: #f0f0f0; }
.st { border: 1px solid #ddd; background: #f4f4f4; line-height: 18px; padding-left: 2px; white-space: nowrap; }
.st0 { width: 148px; }
.st1 { width: 78px; }
.st2 { width: 98px; }
.st3 { width: 47px; }
.st4 { width: 913px; }
.st5 { flex: 1; }

.taskbar { height: 40px; background: #061015; display: flex; align-items: center; color: #fff; flex: none; }
.start { width: 48px; height: 40px; background: #000; display: flex; align-items: center; justify-content: center; padding-right: 11px; }
.start svg { width: 15px; height: 15px; }
.tsearch { width: 344px; height: 40px; background: #333; display: flex; align-items: center; padding-left: 9px; color: #8c8c8c; font-size: 13px; }
.cortana { width: 20px; height: 20px; border: 2px solid #e4e4e4; border-radius: 50%; margin-right: 7px; flex: none; }
.tsearch span { width: 282px; }
.tsearch svg { width: 10px; height: 16px; }
.tslot { height: 40px; display: flex; align-items: center; justify-content: center; flex: none; position: relative; }
.tslot svg { width: 24px; height: 24px; }
.t48 { width: 48px; } .t54 { width: 54px; } .t50 { width: 50px; } .t44 { width: 44px; }
.active { background: #30393d; }
.active::after, .run::after { content: ""; position: absolute; left: 1px; right: 1px; bottom: 0; height: 2px; background: #76b9ed; }
.run::after { left: 4px; right: 6px; }
.tray-link { margin-left: 9px; color: #ddd; }
.cpu { display: flex; flex-direction: column; align-items: center; margin-left: 21px; color: #eee; line-height: 17px; }
.tr-wifi { width: 17px; height: 16px; margin-left: 23px; color: #5fce1a; }
.tr-up { width: 12px; height: 8px; margin-left: 14px; }
.tr-bat { width: 16px; height: 10px; margin-left: 11px; }
.tr-sig { width: 14px; height: 14px; margin-left: 10px; }
.tr-kb { width: 23px; height: 16px; margin-left: 25px; }
.tr-zh { margin-left: 11px; font-size: 13px; }
.tr-s { width: 15px; height: 18px; margin-left: 11px; }
.clock { display: flex; flex-direction: column; align-items: center; width: 60px; margin-left: 24px; line-height: 19px; font-size: 12px; color: #eee; }
.tr-note { width: 16px; height: 16px; margin-left: 13px; }

.pill { position: absolute; left: 548px; top: 21px; width: 121px; height: 54px; border-radius: 27px; background: #fff; box-shadow: 0 2px 8px rgba(0,0,0,.4); display: flex; align-items: center; padding-left: 6px; gap: 6px; }
.pill-dot { width: 38px; height: 38px; border-radius: 50%; background: #2ecb71; color: #fff; display: flex; align-items: center; justify-content: center; }
.pill-dot svg { width: 24px; height: 20px; }
.pill-info { display: flex; flex-direction: column; gap: 7px; color: #8a8a8a; font: 10px "Liberation Sans", sans-serif; letter-spacing: .3px; }
.pill-line { display: flex; align-items: center; gap: 5px; }
.pill-line svg { width: 9px; height: 12px; }
.score { position: absolute; left: 1131px; top: -30px; width: 48px; height: 48px; border-radius: 50%; background: #39bd5c; border: 1px solid #ccc; box-shadow: 0 1px 4px rgba(0,0,0,.45); color: #fff; font: bold 11px "Liberation Sans", sans-serif; text-align: center; padding-top: 31px; }

.mark { position: absolute; border: 7px solid #ff0000; }
.m1 { left: 236px; top: 121px; width: 171px; height: 72px; }
.m2 { left: 368px; top: 305px; width: 427px; height: 92px; }
.m3 { left: -4px; top: 555px; width: 147px; height: 63px; }
.mark-bar { position: absolute; left: 380px; top: 327px; width: 38px; height: 14px; background: #ff0000; }
```
